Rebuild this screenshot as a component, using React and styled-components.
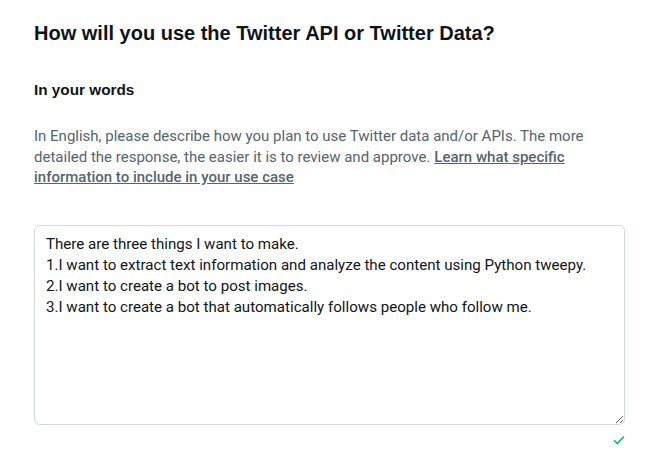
import React from "react";
import styled, { createGlobalStyle } from "styled-components";

const GlobalStyle = createGlobalStyle`
  html, body {
    margin: 0;
    padding: 0;
    background: #ffffff;
  }
  body {
    font-family: Roboto, "Liberation Sans", Arial, sans-serif;
    color: #0f1419;
  }
`;

const Page = styled.main`
  width: 653px;
  height: 455px;
  padding: 20px 28px 0 34px;
  box-sizing: border-box;
  display: flex;
  flex-direction: column;
`;

const Title = styled.h1`
  margin: 0;
  font-family: "Liberation Sans", Arial, sans-serif;
  font-size: 20px;
  line-height: 26px;
  font-weight: 700;
  color: #0f1419;
`;

const SubTitle = styled.h2`
  margin: 34px 0 0;
  font-family: "Liberation Sans", Arial, sans-serif;
  font-size: 15.3px;
  line-height: 20px;
  font-weight: 700;
  color: #0f1419;
`;

const Hint = styled.p`
  margin: 26px 0 0;
  font-size: 15px;
  line-height: 20.5px;
  color: #536471;
  max-width: 580px;
`;

const HintLink = styled.a`
  color: #536471;
  font-weight: 500;
  text-decoration: underline;
  margin-left: 4px;
  cursor: pointer;
`;

const Field = styled.div`
  margin-top: 37px;
  display: flex;
  flex-direction: column;
  align-items: flex-end;
`;

const UseCase = styled.textarea`
  width: 591px;
  height: 200px;
  box-sizing: border-box;
  padding: 8px 11px 6px;
  border: 1px solid #cfd9de;
  border-radius: 6px;
  font-family: Roboto, "Liberation Sans", Arial, sans-serif;
  font-size: 15.1px;
  line-height: 21px;
  color: #0f1419;
  outline: none;
  resize: vertical;
`;

const Valid = styled.span`
  margin: 10px 0 0 0;
  display: flex;
  color: #00ba7c;
`;

const text = `There are three things I want to make.
1.I want to extract text information and analyze the content using Python tweepy.
2.I want to create a bot to post images.
3.I want to create a bot that automatically follows people who follow me.`;

export default function App() {
  return (
    <>
      <GlobalStyle />
      <Page>
        <Title>How will you use the Twitter API or Twitter Data?</Title>
        <SubTitle>In your words</SubTitle>
        <Hint>
          In English, please describe how you plan to use Twitter data and/or
          APIs. The more detailed the response, the easier it is to review and
          approve.
          <HintLink>Learn what specific information to include in your use case</HintLink>
        </Hint>
        <Field>
          <UseCase defaultValue={text} />
          <Valid>
            <svg width="12" height="10" viewBox="0 0 12 10" fill="none">
              <path d="M1 5.2 L4.3 8.5 L11 1.5" stroke="currentColor" strokeWidth="1.6" />
            </svg>
          </Valid>
        </Field>
      </Page>
    </>
  );
}
